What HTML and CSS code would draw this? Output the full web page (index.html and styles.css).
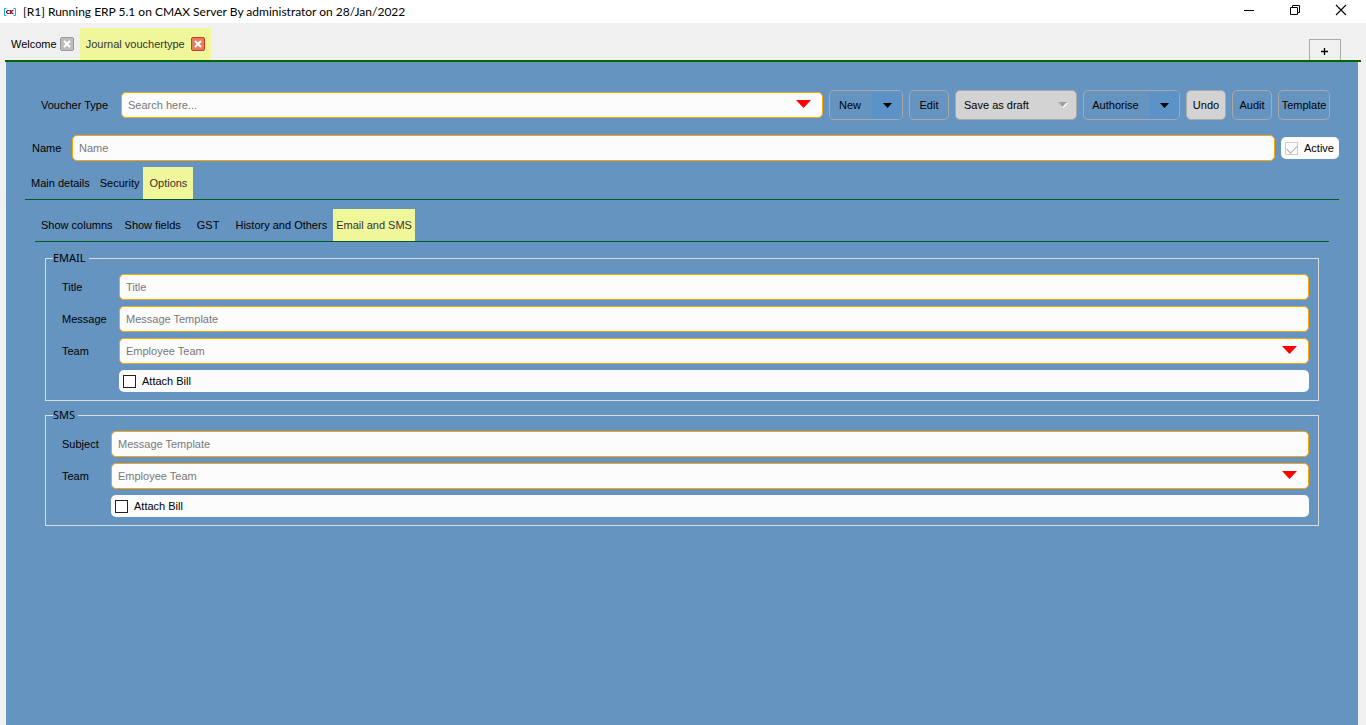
FILE: index.html
```html
<!DOCTYPE html>
<html lang="en">
<head>
<meta charset="utf-8">
<title>[R1] Running ERP 5.1 on CMAX Server By administrator on 28/Jan/2022</title>
<link rel="stylesheet" href="styles.css">
</head>
<body>
<header class="titlebar">
  <svg class="app-icon" width="12" height="10" viewBox="0 0 12 10" fill="none" aria-hidden="true">
    <path d="M2.5 1.5h-2v7h2M9.5 1.5h2v7h-2" stroke="#18a8e8"/>
    <path d="M5.5 3.500h-2l-1 1v1l1 1h2M6.500 3v4M9.500 3l-3 2 3 2" stroke="#7c1230" stroke-width="1.200"/>
  </svg>
  <h1 class="title">[R1] Running ERP 5.1 on CMAX Server By administrator on 28/Jan/2022</h1>
  <div class="window-buttons">
    <button class="window-button" type="button" aria-label="Minimise"><svg width="12" height="12" viewBox="0 0 12 12"><path d="M1 6.500h10" stroke="#000"/></svg></button>
    <button class="window-button" type="button" aria-label="Restore"><svg width="12" height="12" viewBox="0 0 12 12" fill="none" stroke="#000"><path d="M1.500 3.500h7v7h-7zM3.500 3.500v-2h7v7h-2"/></svg></button>
    <button class="window-button" type="button" aria-label="Close"><svg width="12" height="12" viewBox="0 0 12 12"><path d="M1 1l10 10M11 1L1 11" stroke="#000" stroke-width="1.100"/></svg></button>
  </div>
</header>

<nav class="doc-tabs">
  <div class="doc-tab">
    <button class="doc-label" type="button">Welcome</button>
    <button class="close" type="button" aria-label="Close Welcome"><svg width="8" height="8" viewBox="0 0 8 8"><path d="M1 1l6 6M7 1L1 7" stroke="#fff" stroke-width="2"/></svg></button>
  </div>
  <div class="doc-tab current">
    <button class="doc-label" type="button">Journal vouchertype</button>
    <button class="close danger" type="button" aria-label="Close Journal vouchertype"><svg width="8" height="8" viewBox="0 0 8 8"><path d="M1 1l6 6M7 1L1 7" stroke="#fff" stroke-width="2"/></svg></button>
  </div>
  <button class="add-tab" type="button" aria-label="Add tab"><svg width="8" height="8" viewBox="0 0 8 8"><path d="M0 4.500h7M3.500 1v7" stroke="#000" stroke-width="1.300"/></svg></button>
</nav>

<main class="panel">
  <div class="row voucher-row">
    <label for="voucher">Voucher Type</label>
    <div class="combo">
      <select id="voucher" class="field"><option>Search here...</option></select>
      <svg class="arrow" width="15" height="8" viewBox="0 0 15 8"><path d="M0 0h15L7.500 8z" fill="#f00"/></svg>
    </div>
    <div class="split">
      <button class="split-main" type="button">New</button>
      <button class="split-menu" type="button" aria-label="New options"><svg width="9" height="5" viewBox="0 0 9 5"><path d="M0 0h9L4.500 5z"/></svg></button>
    </div>
    <button class="button" type="button">Edit</button>
    <button class="button muted draft" type="button">Save as draft <svg width="10" height="6" viewBox="0 0 10 6"><path d="M1 1h9L5.500 6z" fill="#fff"/><path d="M0 0h9L4.500 5z" fill="#a0a0a0"/></svg></button>
    <div class="split wide">
      <button class="split-main" type="button">Authorise</button>
      <button class="split-menu" type="button" aria-label="Authorise options"><svg width="9" height="5" viewBox="0 0 9 5"><path d="M0 0h9L4.500 5z"/></svg></button>
    </div>
    <button class="button muted" type="button">Undo</button>
    <button class="button" type="button">Audit</button>
    <button class="button large" type="button">Template</button>
  </div>

  <div class="row name-row">
    <label for="name">Name</label>
    <input id="name" class="field" type="text" placeholder="Name">
    <label class="check active-check"><input type="checkbox" checked disabled>Active</label>
  </div>

  <div class="tabs main-tabs">
    <button class="tab" type="button">Main details</button>
    <button class="tab" type="button">Security</button>
    <button class="tab current" type="button">Options</button>
  </div>

  <section class="options">
    <div class="tabs option-tabs">
      <button class="tab" type="button">Show columns</button>
      <button class="tab" type="button">Show fields</button>
      <button class="tab gst" type="button">GST</button>
      <button class="tab" type="button">History and Others</button>
      <button class="tab current" type="button">Email and SMS</button>
    </div>

    <div class="groups">
      <fieldset class="group">
        <legend>EMAIL</legend>
        <div class="form email">
          <label for="mail-title">Title</label>
          <input id="mail-title" class="field" type="text" placeholder="Title">
          <label for="mail-message">Message</label>
          <input id="mail-message" class="field" type="text" placeholder="Message Template">
          <label for="mail-team">Team</label>
          <div class="combo">
            <select id="mail-team" class="field"><option>Employee Team</option></select>
            <svg class="arrow" width="15" height="8" viewBox="0 0 15 8"><path d="M0 0h15L7.500 8z" fill="#f00"/></svg>
          </div>
          <label class="check attach"><input type="checkbox">Attach Bill</label>
        </div>
      </fieldset>

      <fieldset class="group">
        <legend>SMS</legend>
        <div class="form sms">
          <label for="sms-subject">Subject</label>
          <input id="sms-subject" class="field" type="text" placeholder="Message Template">
          <label for="sms-team">Team</label>
          <div class="combo">
            <select id="sms-team" class="field"><option>Employee Team</option></select>
            <svg class="arrow" width="15" height="8" viewBox="0 0 15 8"><path d="M0 0h15L7.500 8z" fill="#f00"/></svg>
          </div>
          <label class="check attach"><input type="checkbox">Attach Bill</label>
        </div>
      </fieldset>
    </div>
  </section>
</main>
</body>
</html>
```
FILE: styles.css
```css
* { box-sizing: border-box; }

body {
  margin: 0;
  min-height: 100vh;
  display: flex;
  flex-direction: column;
  background: #f0f0f0;
  color: #000;
  font: 11px/14px "Liberation Sans", Arial, sans-serif;
}

button, input, select { font: inherit; color: inherit; margin: 0; }
button { padding: 0; border: 0; background: none; white-space: nowrap; }
svg { display: block; flex: none; }

.titlebar {
  display: flex;
  align-items: center;
  height: 23px;
  padding: 0 2px 0 4px;
  background: #fff;
}
.title {
  flex: 1;
  margin: 0 0 0 7px;
  font: 12px/16px Lato, "Noto Sans", sans-serif;
}
.window-buttons { display: flex; padding-bottom: 3px; }
.window-button {
  display: flex;
  align-items: center;
  justify-content: center;
  width: 46px;
  height: 20px;
}

.doc-tabs {
  display: flex;
  align-items: flex-end;
  height: 39px;
  margin: 0 5px;
  border-bottom: 2px solid #006400;
}
.doc-tab {
  display: flex;
  align-items: center;
  gap: 3px;
  height: 32px;
  padding: 0 6px;
}
.doc-tab.current { gap: 6px; background: #f0f79a; color: #333; }
.close {
  display: flex;
  align-items: center;
  justify-content: center;
  width: 14px;
  height: 14px;
  border: 1px solid #999;
  border-radius: 2px;
  background: #bdbdbd;
}
.close.danger { border-color: #d8351e; background: #e08060; }
.add-tab {
  display: flex;
  align-items: center;
  justify-content: center;
  width: 32px;
  height: 21px;
  margin: 0 20px 0 auto;
  padding-top: 2px;
  border: 1px solid #a9a9a9;
  border-bottom: 0;
}

.panel {
  flex: 1;
  margin: 0 8px 0 6px;
  padding: 28px 19px 0;
  background: #6694c1;
}
.row { display: flex; align-items: center; gap: 6px; }
.voucher-row { padding: 0 9px 0 16px; }
.voucher-row > label { width: 74px; }
.name-row { margin-top: 15px; padding-left: 7px; }
.name-row > label:first-child { width: 34px; }

.field {
  flex: 1;
  width: 100%;
  min-width: 0;
  height: 26px;
  padding: 0 6px;
  border: 1px solid #ffa500;
  border-radius: 5px;
  background: #fcfcfc;
  color: #787878;
}
.field::placeholder { color: #787878; opacity: 1; }
select.field { appearance: none; display: block; }
.combo { position: relative; flex: 1; }
.arrow {
  position: absolute;
  right: 12px;
  top: 8px;
  pointer-events: none;
}

.button, .split {
  height: 30px;
  border: 1px solid #a9a9a9;
  border-radius: 5px;
}
.button { width: 40px; }
.button.large { width: 52px; }
.button.muted { background: #d3d3d3; }
.button.draft {
  display: flex;
  align-items: center;
  justify-content: space-between;
  width: 122px;
  padding: 0 8px;
}
.split { display: flex; width: 74px; overflow: hidden; }
.split.wide { width: 97px; }
.split-main { flex: 1; padding-right: 2px; }
.split-menu {
  display: flex;
  align-items: center;
  justify-content: center;
  width: 30px;
  background: #5b93c9;
}

.check {
  display: flex;
  align-items: center;
  gap: 6px;
  height: 22px;
  padding: 0 4px;
  border-radius: 5px;
  background: #fcfcfc;
}
.active-check { width: 58px; }
.check input {
  appearance: none;
  flex: none;
  width: 13px;
  height: 13px;
  border: 1px solid #222;
  background: #fff;
}
.check input:disabled { border-color: #ccc; }
.check input:checked {
  display: flex;
  align-items: flex-start;
  justify-content: center;
}
.check input:checked::before {
  content: "";
  width: 9px;
  height: 5px;
  margin-top: 2px;
  border: solid #aaa;
  border-width: 0 0 1px 1px;
  transform: rotate(-45deg);
}

.tabs { display: flex; border-bottom: 1px solid #005a28; }
.main-tabs { margin-top: 6px; }
.tab { height: 32px; padding: 0 6px; }
.tab.gst { padding: 0 10px; }
.tab.current { background: #f0f79a; color: #333; }
.main-tabs .tab { padding: 0 4px 0 6px; }
.main-tabs .tab.current { padding: 0 6px; }
.option-tabs .tab.current { padding: 0 3px; }

.options { padding: 9px 10px 0; }
.groups {
  display: grid;
  gap: 7px;
  padding: 9px 10px 0;
}
.group {
  min-width: 0;
  margin: 0;
  padding: 9px 9px 8px 16px;
  border: 1px solid #dcdcdc;
}
.group legend {
  margin-left: -9px;
  padding: 0 3px 0 0;
  font: 11px/14px "Noto Sans", sans-serif;
}
.form {
  display: grid;
  align-items: center;
  row-gap: 6px;
}
.form.email { grid-template-columns: 57px 1fr; }
.form.sms { grid-template-columns: 49px 1fr; }
.attach { grid-column: 2; }
```
